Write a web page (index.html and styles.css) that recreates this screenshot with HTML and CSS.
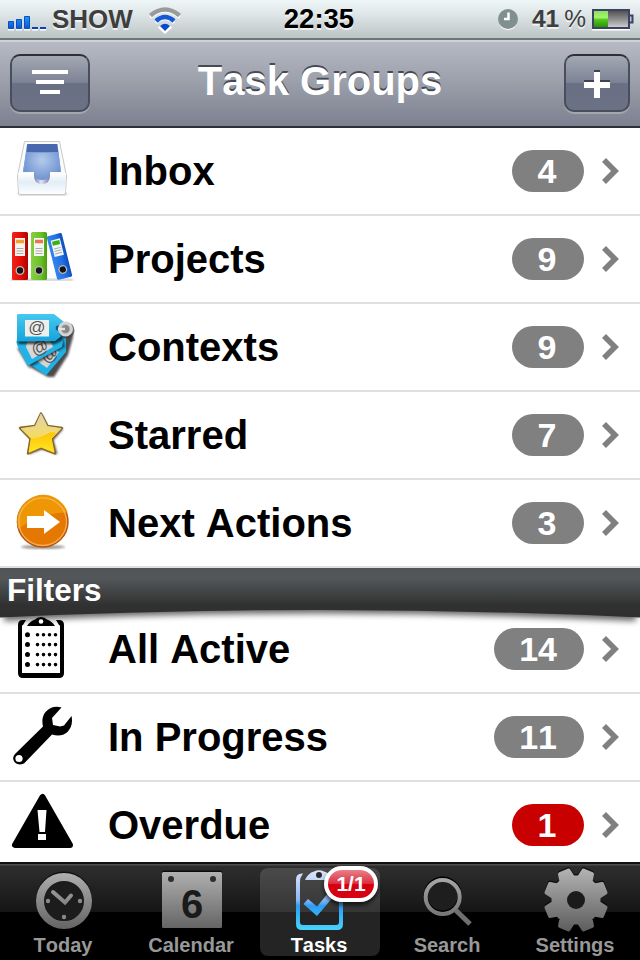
FILE: index.html
```html
<!DOCTYPE html>
<html lang="en">
<head>
    <meta charset="UTF-8">
    <meta name="viewport" content="width=device-width, initial-scale=1.0">
    <title>Task Groups</title>
    <link rel="stylesheet" href="styles.css">
</head>
<body>
    <div class="app">
        <div class="status-bar">
            <div class="status-left">
                <svg class="signal" width="38" height="40" viewBox="0 0 38 40">
                    <defs>
                        <linearGradient id="signalFill" x1="0" y1="0" x2="0" y2="1">
                            <stop offset="0" stop-color="#1c9cf5"/>
                            <stop offset="1" stop-color="#0a55d0"/>
                        </linearGradient>
                    </defs>
                    <path d="M0 29.5h6M8 29.5h6M16 29.5h6M24 29.5h6M32 29.5h6" stroke="#fff" stroke-width="2"/>
                    <path d="M.5 21.5h5v7h-5zM8.500 19.500h5v9h-5zM16.500 16.500h5v12h-5z" fill="url(#signalFill)" stroke="#0b4fc0"/>
                    <path d="M24 28h6M32 28h6" stroke="#0b3fc0" stroke-width="2"/>
                </svg>
                <span class="carrier">SHOW</span>
                <svg class="wifi" width="34" height="40" viewBox="0 0 34 40" fill="none">
                    <path d="M2.500 17.500Q17 4.500 31.500 17.500M8 23q9-8.500 18 0M12 27.500q5-4.500 10 0L17 32z" stroke="#fff" stroke-width="3"/>
                    <path d="M2.500 15.500Q17 3.500 31.500 15.500" stroke="#999b9b" stroke-width="4.500"/>
                    <path d="M8 21q9-8 18 0" stroke="#1458d8" stroke-width="4.500"/>
                    <path d="M12 26q5-4.500 10 0l-5 5z" fill="#0a48cc"/>
                </svg>
            </div>
            <div class="clock">22:35</div>
            <div class="status-right">
                <svg width="20" height="40" viewBox="0 0 20 40">
                    <circle cx="10" cy="20.500" r="9.500" fill="#fff"/>
                    <circle cx="10" cy="19" r="10" fill="#80908f"/>
                    <path d="M10.500 12.500V19H6" fill="none" stroke="#fff" stroke-width="2.500"/>
                </svg>
                <span class="percent"><b>41</b><span>%</span></span>
                <svg width="42" height="40" viewBox="0 0 42 40">
                    <defs>
                        <linearGradient id="charge" x1="0" y1="0" x2="0" y2="1">
                            <stop offset="0" stop-color="#8ce060"/>
                            <stop offset=".4" stop-color="#a4f56c"/>
                            <stop offset=".55" stop-color="#52c420"/>
                            <stop offset="1" stop-color="#2c9208"/>
                        </linearGradient>
                        <linearGradient id="drained" x1="0" y1="0" x2="0" y2="1">
                            <stop offset="0" stop-color="#4c4c4c"/>
                            <stop offset=".5" stop-color="#8c8c8c"/>
                            <stop offset="1" stop-color="#d4d4d4"/>
                        </linearGradient>
                    </defs>
                    <path d="M0 29.500h38" stroke="#fff" stroke-width="2"/>
                    <rect x="1" y="10" width="36" height="18" fill="url(#drained)" stroke="#3c4264" stroke-width="2"/>
                    <rect x="2" y="11" width="14" height="16" fill="url(#charge)"/>
                    <path d="M38 15.500h2.500v7H38" fill="#c0c4cc" stroke="#3c4264" stroke-width="2"/>
                </svg>
            </div>
        </div>

        <div class="nav-bar">
            <div class="nav-btn nav-sort">
                <svg width="76" height="54" viewBox="0 0 76 54">
                    <path d="M20 16h36M24 26h28M28 36h20" stroke="#fff" stroke-width="4"/>
                </svg>
            </div>
            <h1>Task Groups</h1>
            <div class="nav-btn nav-add">
                <svg width="62" height="54" viewBox="0 0 62 54">
                    <path d="M18 25h26M28 15h6" stroke="#3d4351" stroke-width="2"/>
                    <path d="M18 29h26M31 16v26" stroke="#fff" stroke-width="6"/>
                </svg>
            </div>
        </div>

        <div class="list">
            <div class="row">
                <svg class="icon" viewBox="0 0 84 86">
                    <defs>
                        <radialGradient id="trayIn" cx=".5" cy=".45" r=".65">
                            <stop offset="0" stop-color="#b4cceb"/>
                            <stop offset="1" stop-color="#6288cc"/>
                        </radialGradient>
                        <linearGradient id="trayFront" x1="0" y1="0" x2="0" y2="1">
                            <stop offset="0" stop-color="#fff"/>
                            <stop offset=".45" stop-color="#e3edf6"/>
                            <stop offset="1" stop-color="#fcfdff"/>
                        </linearGradient>
                        <linearGradient id="trayLip" x1="0" y1="0" x2="1" y2="0">
                            <stop offset="0" stop-color="#7078ae"/>
                            <stop offset=".45" stop-color="#e4e6f4"/>
                            <stop offset="1" stop-color="#7078ae"/>
                        </linearGradient>
                        <filter id="soft" x="-20%" y="-20%" width="140%" height="140%"><feGaussianBlur stdDeviation="1.200"/></filter>
                    </defs>
                    <path d="M18 65h49l-1 2H19z" fill="#000" opacity=".35" filter="url(#soft)"/>
                    <path d="M24.500 13.500h35l7 34.500-1 17q0 1.500-2 1.500h-43q-2 0-2-1.500l-1-17z" fill="#fafafa" stroke="#c8c8c8"/>
                    <path d="M18 45h48v3l-.8 16q0 1.500-1.500 1.500H20.500q-1.500 0-1.500-1.500z" fill="url(#trayFront)"/>
                    <path d="M34 44v3q0 9 8 9t8-9v-3z" fill="url(#trayLip)"/>
                    <path d="M27 16h30.500L61 44H50q0 8-8 8t-8-8H23z" fill="url(#trayIn)"/>
                    <path d="M27.500 16H57l1.200 8.500H26.500z" fill="#4867ac"/>
                    <path d="M23.500 43.500l3.200-19M60.500 43.500l-2.500-19M26.500 24.500h31.700" stroke="#7ba0df"/>
                </svg>
                <span class="name">Inbox</span>
                <span class="count">4</span>
                <svg class="chevron" viewBox="0 0 18 26"><path d="M2 2l11 11L2 24" fill="none" stroke="#808080" stroke-width="5.600"/></svg>
            </div>
            <div class="row">
                <svg class="icon" viewBox="0 0 84 86">
                    <defs>
                        <linearGradient id="redFill" x1="0" y1="0" x2="1" y2="0">
                            <stop offset="0" stop-color="#f02418"/><stop offset=".6" stop-color="#e20c06"/><stop offset="1" stop-color="#a80400"/>
                        </linearGradient>
                        <linearGradient id="greenFill" x1="0" y1="0" x2="1" y2="0">
                            <stop offset="0" stop-color="#88d040"/><stop offset=".6" stop-color="#6cc02c"/><stop offset="1" stop-color="#48a00c"/>
                        </linearGradient>
                        <linearGradient id="blueFill" x1="0" y1="0" x2="1" y2="0">
                            <stop offset="0" stop-color="#3484ec"/><stop offset=".6" stop-color="#2070e4"/><stop offset="1" stop-color="#0c4cbc"/>
                        </linearGradient>
                    </defs>
                    <path d="M11 63h62v1.500H11z" opacity=".3" filter="url(#soft)"/>
                    <rect x="12" y="16" width="16" height="48" rx="1.500" fill="url(#redFill)"/>
                    <rect x="15" y="22" width="10" height="18" fill="#f8f4f0"/>
                    <path d="M16 25.500h8" stroke="#f0a030" stroke-width="3.500"/>
                    <path d="M16.500 32.500h7M16.500 35h7M16.500 37.500h7" stroke="#aaa"/>
                    <circle cx="20" cy="54.500" r="3.800" fill="#151515" stroke="#bbb" stroke-width="1.300"/>
                    <rect x="31" y="16" width="16" height="48" rx="1.500" fill="url(#greenFill)"/>
                    <rect x="34" y="22" width="10" height="18" fill="#f4f8f0"/>
                    <path d="M35 25.500h8" stroke="#ec7450" stroke-width="3.500"/>
                    <path d="M35.500 32.500h7M35.500 35h7M35.500 37.500h7" stroke="#aaa"/>
                    <circle cx="39" cy="54.500" r="3.800" fill="#151515" stroke="#bbb" stroke-width="1.300"/>
                    <g transform="translate(46.500 20.500) rotate(-14)">
                        <rect width="15.500" height="45" rx="1.500" fill="url(#blueFill)"/>
                        <rect x="3" y="5" width="9.500" height="17" fill="#f0f6fa"/>
                        <path d="M4 8.500h7.500" stroke="#38b010" stroke-width="4"/>
                        <path d="M4.200 14h7M4.200 16.500h7M4.200 19h7" stroke="#aaa"/>
                        <circle cx="7.800" cy="36" r="3.800" fill="#151515" stroke="#bbb" stroke-width="1.300"/>
                    </g>
                </svg>
                <span class="name">Projects</span>
                <span class="count">9</span>
                <svg class="chevron" viewBox="0 0 18 26"><path d="M2 2l11 11L2 24" fill="none" stroke="#808080" stroke-width="5.600"/></svg>
            </div>
            <div class="row">
                <svg class="icon" viewBox="0 0 84 86">
                    <defs>
                        <linearGradient id="tagFill" x1="0" y1="0" x2="0" y2="1">
                            <stop offset="0" stop-color="#48c8f0"/><stop offset="1" stop-color="#14a4dc"/>
                        </linearGradient>
                    </defs>
                    <path d="M30 63l18 10h6l14-22 5-18-1-12-11 0-8 20z" opacity=".7" filter="url(#soft)"/>
                    <path d="M29 60l17 11.500L66 48V34l-8 0z" fill="#1fb0e4"/>
                    <path d="M37 57l10 7 12-16-9-6z" fill="#d4d4d4"/>
                    <text class="tag-at" x="50" y="56" transform="rotate(-40 50 51)">@</text>
                    <path d="M17 44l12 20 36-21-2-8z" opacity=".6" filter="url(#soft)"/>
                    <path d="M16.500 37q0 3 1 5l10 20L62 43l2-11z" fill="#22b2e6"/>
                    <path d="M26 43l6 12 21-12-4-9H28z" fill="#d8d8d8"/>
                    <text class="tag-at" x="40" y="49" transform="rotate(-28 40 44)">@</text>
                    <path d="M17 36h38l8-7v7l-8 4H19z" opacity=".7" filter="url(#soft)"/>
                    <path d="M17 11q0-1 1-1h36l10 8v12l-9 7-37 .5q-1 0-1-1z" fill="url(#tagFill)"/>
                    <rect x="25" y="16" width="24" height="16.500" fill="#eee"/>
                    <text class="tag-at" x="37" y="29">@</text>
                    <circle cx="58.500" cy="24" r="2.800" fill="#155b75"/>
                    <circle cx="66.500" cy="26.500" r="6" fill="none" stroke="#444" stroke-width="4" opacity=".7"/>
                    <circle cx="65.500" cy="25" r="6" fill="#a8a8a8" stroke="#d4d4d4" stroke-width="3"/>
                    <circle cx="65.500" cy="25" r="3.800" fill="#888"/>
                    <path d="M58 25h7" stroke="#e4e4e4" stroke-width="2.500"/>
                </svg>
                <span class="name">Contexts</span>
                <span class="count">9</span>
                <svg class="chevron" viewBox="0 0 18 26"><path d="M2 2l11 11L2 24" fill="none" stroke="#808080" stroke-width="5.600"/></svg>
            </div>
            <div class="row">
                <svg class="icon" viewBox="0 0 84 86">
                    <defs>
                        <linearGradient id="starFill" x1="0" y1="0" x2="0" y2="1">
                            <stop offset="0" stop-color="#e0d4a8"/><stop offset=".5" stop-color="#f2da70"/><stop offset="1" stop-color="#ffd800"/>
                        </linearGradient>
                        <linearGradient id="starLow" x1="0" y1="0" x2="0" y2="1">
                            <stop offset="0" stop-color="#ffc400"/><stop offset="1" stop-color="#ffe428"/>
                        </linearGradient>
                    </defs>
                    <path d="M42 23l6 13 15 1-10 11 4 14-15-5-13 5 2-15-11-11 15-1z" opacity=".6" stroke="#000" stroke-linejoin="round" filter="url(#soft)"/>
                    <path id="starShape" d="M41 21.500L47.500 34 62 36 52 47l3 14.500-14-5.500-13 5.500L30.500 47 20 36l15-2z" fill="url(#starFill)" stroke="#86662c" stroke-width="2.400" stroke-linejoin="round"/>
                    <path d="M41 22L47.200 34.500 61 36.500 51.200 46.700 54 60.300 41 55 29 60.300 31.300 46.700 21.200 36.600 35.300 34.500z" fill="url(#starFill)" stroke="url(#starFill)" stroke-linejoin="round"/>
                    <path d="M31 47q9-1 15-4.500 6-3.500 10-1.500l-4.700 5.700L54 60.300 41 55 29 60.300z" fill="url(#starLow)"/>
                </svg>
                <span class="name">Starred</span>
                <span class="count">7</span>
                <svg class="chevron" viewBox="0 0 18 26"><path d="M2 2l11 11L2 24" fill="none" stroke="#808080" stroke-width="5.600"/></svg>
            </div>
            <div class="row">
                <svg class="icon" viewBox="0 0 84 86">
                    <ellipse cx="43" cy="67" rx="22" ry="2" opacity=".4" filter="url(#soft)"/>
                    <circle cx="42.700" cy="41.700" r="25.300" fill="#e47800" stroke="#b8540c" stroke-width="1.400"/>
                    <path d="M18.500 49a25.200 25.200 0 1 1 49.200-16.500Q38 33 18.500 49z" fill="#ee9604"/>
                    <circle cx="42.700" cy="41.700" r="23.800" fill="none" stroke="#f6bc68" stroke-width="1.300" opacity=".8"/>
                    <path d="M27 36h17v-6l16 12-16 12v-6H27z" fill="#fff"/>
                </svg>
                <span class="name">Next Actions</span>
                <span class="count">3</span>
                <svg class="chevron" viewBox="0 0 18 26"><path d="M2 2l11 11L2 24" fill="none" stroke="#808080" stroke-width="5.600"/></svg>
            </div>

            <div class="section">
                <!-- curved bottom edge hangs over the next row -->
                <svg class="section-bg" width="640" height="64" viewBox="0 0 640 64">
                    <defs>
                        <linearGradient id="sectionFill" x1="0" y1="0" x2="0" y2="1">
                            <stop offset="0" stop-color="#515558"/>
                            <stop offset=".2" stop-color="#53575a"/>
                            <stop offset=".75" stop-color="#313131"/>
                            <stop offset="1" stop-color="#2f2f2f"/>
                        </linearGradient>
                        <filter id="sectionShadow" x="-5%" y="-10%" width="110%" height="150%"><feGaussianBlur stdDeviation="3"/></filter>
                    </defs>
                    <path d="M4 20H636V53Q320 38 4 53z" opacity=".6" filter="url(#sectionShadow)"/>
                    <path d="M0 0H640V49.500Q320 34.500 0 49.500z" fill="url(#sectionFill)"/>
                </svg>
                <h2>Filters</h2>
            </div>

            <div class="row">
                <svg class="icon" viewBox="0 0 84 86">
                    <path d="M26 14h-3q-5 0-5 5v48q0 5 5 5h36q5 0 5-5V19q0-5-5-5h-3l3 5q1 0 1 1v47H22V20q0-1 1-1z"/>
                    <path d="M27 20q3-5 8-6.500Q37 11 41 11t6 2.500q5 1.500 8 6.500z"/>
                    <circle cx="41" cy="15.500" r="2.300" fill="#fff"/>
                    <g stroke="#000" stroke-linecap="round">
                        <path d="M27.500 28.700h0M27.500 38.600h0M27.500 48.600h0M27.500 58.600h0" stroke-width="5"/>
                        <path d="M37.500 28.700h0M43.500 28.700h0M49.500 28.700h0M55.500 28.700h0M37.500 38.600h0M43.500 38.600h0M49.500 38.600h0M55.500 38.600h0M37.500 48.600h0M43.500 48.600h0M49.500 48.600h0M55.500 48.600h0M37.500 58.600h0M43.500 58.600h0M49.500 58.600h0M55.500 58.600h0" stroke-width="3.600"/>
                    </g>
                </svg>
                <span class="name">All Active</span>
                <span class="count">14</span>
                <svg class="chevron" viewBox="0 0 18 26"><path d="M2 2l11 11L2 24" fill="none" stroke="#808080" stroke-width="5.600"/></svg>
            </div>
            <div class="row">
                <svg class="icon" viewBox="0 0 84 86">
                    <path d="M61.500 13.500Q52 11 45.500 18q-4.500 5.500-2.500 14.500L15 60q-3.500 4-.5 8t9.500 1.500l28-29q9 3 15.500-2.500Q73.500 31 71.500 22l-7.500 9.500-4 1-7-1.500-1-7z"/>
                    <circle cx="19" cy="64.500" r="3.600" fill="#fff"/>
                </svg>
                <span class="name">In Progress</span>
                <span class="count">11</span>
                <svg class="chevron" viewBox="0 0 18 26"><path d="M2 2l11 11L2 24" fill="none" stroke="#808080" stroke-width="5.600"/></svg>
            </div>
            <div class="row">
                <svg class="icon" viewBox="0 0 84 86">
                    <path d="M42.500 15L15 63h55z" stroke="#000" stroke-width="6" stroke-linejoin="round"/>
                    <path d="M37.500 28h9L45 50h-5.500zM38 52h8v6h-8z" fill="#fff"/>
                </svg>
                <span class="name">Overdue</span>
                <span class="count overdue">1</span>
                <svg class="chevron" viewBox="0 0 18 26"><path d="M2 2l11 11L2 24" fill="none" stroke="#808080" stroke-width="5.600"/></svg>
            </div>
        </div>

        <div class="tab-bar">
            <div class="tab">
                <svg viewBox="0 0 128 70">
                    <defs>
                        <linearGradient id="tabFill" gradientUnits="userSpaceOnUse" x1="0" y1="8" x2="0" y2="70">
                            <stop offset="0" stop-color="#b2b2b2"/><stop offset="1" stop-color="#606060"/>
                        </linearGradient>
                    </defs>
                    <circle cx="64" cy="37.500" r="24" fill="none" stroke="#000" stroke-width="8" opacity=".6"/>
                    <circle cx="64" cy="39" r="20" fill="#1c1c1c"/>
                    <circle cx="64" cy="39" r="24" fill="none" stroke="url(#tabFill)" stroke-width="8"/>
                    <path d="M53 30l12 10.500 6-7" fill="none" stroke="url(#tabFill)" stroke-width="4" stroke-linecap="round"/>
                    <g fill="#8a8a8a"><circle cx="48" cy="39" r="2.200"/><circle cx="80" cy="39" r="2.200"/><circle cx="64" cy="55" r="2.200"/></g>
                </svg>
                <span>Today</span>
            </div>
            <div class="tab">
                <svg viewBox="0 0 128 70">
                    <rect x="34" y="8.500" width="60" height="56" rx="1.500" opacity=".7"/>
                    <rect x="34" y="10" width="60" height="56" rx="1.500" fill="url(#tabFill)"/>
                    <circle cx="43" cy="17" r="3" fill="#2c2c2c"/>
                    <circle cx="85" cy="17" r="3" fill="#2c2c2c"/>
                    <text class="day" x="64" y="56">6</text>
                </svg>
                <span>Calendar</span>
            </div>
            <div class="tab active">
                <svg viewBox="0 0 128 70">
                    <defs>
                        <linearGradient id="activeFill" gradientUnits="userSpaceOnUse" x1="0" y1="8" x2="0" y2="68">
                            <stop offset="0" stop-color="#dfe6fa"/><stop offset=".5" stop-color="#8cb8f4"/>
                            <stop offset=".6" stop-color="#2c9cf4"/><stop offset="1" stop-color="#48d4fc"/>
                        </linearGradient>
                    </defs>
                    <path d="M47 11.500q-7-.5-7 6V62q0 6 6 6h35q6 0 6-6V18q0-6-6-6.500l-1 4q3 .5 3 3V60q0 3-3 3H47q-3 0-3-3V20q0-4 1-5z" fill="url(#activeFill)"/>
                    <path d="M49 18q3-7 9-8.500 5-2.500 10 0 6 1.500 9 8.500z" fill="url(#activeFill)"/>
                    <circle cx="63" cy="13" r="3" fill="#2a2a2a"/>
                    <path d="M47.500 42l4.500-5 9 7.500L73 30l5 4-17 20z" fill="url(#activeFill)"/>
                </svg>
                <span>Tasks</span>
                <div class="badge">1/1</div>
            </div>
            <div class="tab">
                <svg viewBox="0 0 128 70">
                    <circle cx="58.700" cy="33.500" r="17" fill="#1e1e1e" stroke="#000" stroke-width="4"/>
                    <circle cx="58.700" cy="35" r="17" fill="none" stroke="url(#tabFill)" stroke-width="4"/>
                    <path d="M71.500 48L86 62" stroke="#707070" stroke-width="5"/>
                </svg>
                <span>Search</span>
            </div>
            <div class="tab">
                <svg viewBox="0 0 128 70">
                    <defs>
                        <linearGradient id="gearFill" gradientUnits="userSpaceOnUse" x1="0" y1="-32" x2="0" y2="32">
                            <stop offset="0" stop-color="#b4b4b4"/><stop offset="1" stop-color="#5c5c5c"/>
                        </linearGradient>
                        <path id="gear" stroke-width="4" stroke-linejoin="round" d="M3-22.500L7.500-29.500 16-26 14.500-18.500 18.500-14.500 26-16 29.500-7.500 22.500-3V3L29.500 7.500 26 16 18.500 14.500 14.500 18.500 16 26 7.500 29.500 3 22.500H-3L-7.500 29.500-16 26-14.500 18.500-18.500 14.500-26 16-29.500 7.500-22.500 3V-3L-29.500-7.500-26-16-18.500-14.500-14.500-18.500-16-26-7.500-29.500-3-22.500z"/>
                    </defs>
                    <use href="#gear" x="64" y="36.500" fill="#000" stroke="#000" opacity=".6"/>
                    <use href="#gear" x="64" y="38" fill="url(#gearFill)" stroke="url(#gearFill)"/>
                    <circle cx="64" cy="38" r="9" fill="#1b1b1b"/>
                </svg>
                <span>Settings</span>
            </div>
        </div>
    </div>
</body>
</html>
```

FILE: styles.css
```css
body {
    margin: 0;
    background: #000;
    font-family: "Liberation Sans", Arial, Helvetica, sans-serif;
    font-weight: bold;
    font-kerning: none;
}
.app {
    display: flex;
    flex-direction: column;
    width: 640px;
    height: 960px;
    overflow: hidden;
    background: #fff;
}
svg {
    display: block;
    flex: none;
}

/* status bar */
.status-bar {
    display: grid;
    grid-template-columns: 1fr auto 1fr;
    height: 38px;
    border-bottom: 2px solid #6c7778;
    padding: 0 6px 0 8px;
    background: linear-gradient(#eef6f8, #dfe7e9 35%, #bcc4c6);
    line-height: 38px;
    text-shadow: 0 2px 0 rgba(255, 255, 255, 0.7);
}
.status-left,
.status-right {
    display: flex;
}
.status-right {
    justify-content: flex-end;
}
.carrier {
    margin: 0 15px 0 6px;
    font-size: 26px;
    color: #3e3e3e;
}
.clock {
    margin-right: 4px;
    font-size: 27.500px;
    line-height: 38px;
    color: #000;
}
.percent {
    display: flex;
    gap: 5px;
    margin: 0 6px 0 14px;
    font-size: 24.500px;
    line-height: 38px;
    color: #3e3e3e;
}
.percent span {
    font-weight: normal;
}

/* navigation bar */
.nav-bar {
    display: flex;
    align-items: flex-start;
    justify-content: space-between;
    box-sizing: border-box;
    height: 88px;
    padding: 12px 10px 0;
    border-top: 2px solid #cfd2d8;
    border-bottom: 2px solid #2c2f38;
    background: linear-gradient(#b7bac4, #9a9ea9 50%, #7c8190);
}
.nav-bar h1 {
    margin: 0 0 0 -14px;
    font-size: 40px;
    line-height: 54px;
    color: #fff;
    text-shadow: 0 -2px 0 rgba(40, 44, 54, 0.75);
}
.nav-btn {
    box-sizing: border-box;
    height: 58px;
    border: 2px solid #4a4e5c;
    border-top-color: #2e3038;
    border-radius: 10px;
    background: linear-gradient(#a4a8b4, #7c8294 50%, #6a7084 51%, #6c7286);
    box-shadow: 0 2px 0 rgba(255, 255, 255, 0.25);
}
.nav-sort {
    width: 80px;
}
.nav-add {
    width: 66px;
}

/* list */
.list {
    flex: 1;
    min-height: 0;
    overflow: hidden;
}
.row {
    display: flex;
    align-items: center;
    height: 86px;
    padding-right: 20px;
    border-bottom: 2px solid #e0e0e0;
}
.icon {
    position: relative;
    z-index: 2;
    width: 84px;
    height: 86px;
}
.tag-at {
    font-size: 17px;
    font-weight: normal;
    text-anchor: middle;
    fill: #555;
}
.name {
    flex: 1;
    margin-left: 24px;
    font-size: 40px;
    color: #000;
}
.count {
    box-sizing: border-box;
    min-width: 72px;
    height: 42px;
    padding: 0 27px 0 25px;
    border-radius: 21px;
    background: #808080;
    color: #fff;
    font-size: 34px;
    line-height: 43px;
    text-align: center;
}
.count.overdue {
    background: #c80000;
}
.chevron {
    width: 18px;
    height: 26px;
    margin-left: 18px;
}

.section {
    position: relative;
    z-index: 1;
    height: 38px;
}
.section-bg {
    position: absolute;
    top: 0;
    left: 0;
}
.section h2 {
    position: relative;
    margin: 0;
    padding-left: 7px;
    font-size: 31.500px;
    line-height: 45px;
    color: #fff;
}

/* tab bar */
.tab-bar {
    display: flex;
    box-sizing: border-box;
    height: 98px;
    background: linear-gradient(#111 0, #111 2px, #4e4e4e 2px, #4e4e4e 3px, #2e2e2e 4px, #151515 50px, #000 50px);
}
.tab {
    position: relative;
    width: 128px;
    color: #989898;
    font-size: 20px;
    line-height: 26px;
    text-align: center;
}
.tab svg {
    position: relative;
    width: 128px;
    height: 70px;
}
.tab span {
    position: relative;
    margin-right: 2px;
}
.tab.active {
    color: #fff;
}
.tab.active::before {
    content: "";
    position: absolute;
    top: 6px;
    left: 4px;
    width: 120px;
    height: 88px;
    border-radius: 8px;
    background: rgba(255, 255, 255, 0.14);
}
.day {
    font-size: 40px;
    text-anchor: middle;
    fill: #1a1a1a;
}
.badge {
    position: absolute;
    top: 4px;
    left: 68px;
    box-sizing: border-box;
    width: 54px;
    height: 36px;
    border: 4px solid #fff;
    border-radius: 18px;
    background: linear-gradient(#e8808a, #dc3040 48%, #d40010 52%, #d80010);
    box-shadow: 0 3px 4px rgba(0, 0, 0, 0.7);
    color: #fff;
    font-size: 21px;
    line-height: 28px;
}
```
